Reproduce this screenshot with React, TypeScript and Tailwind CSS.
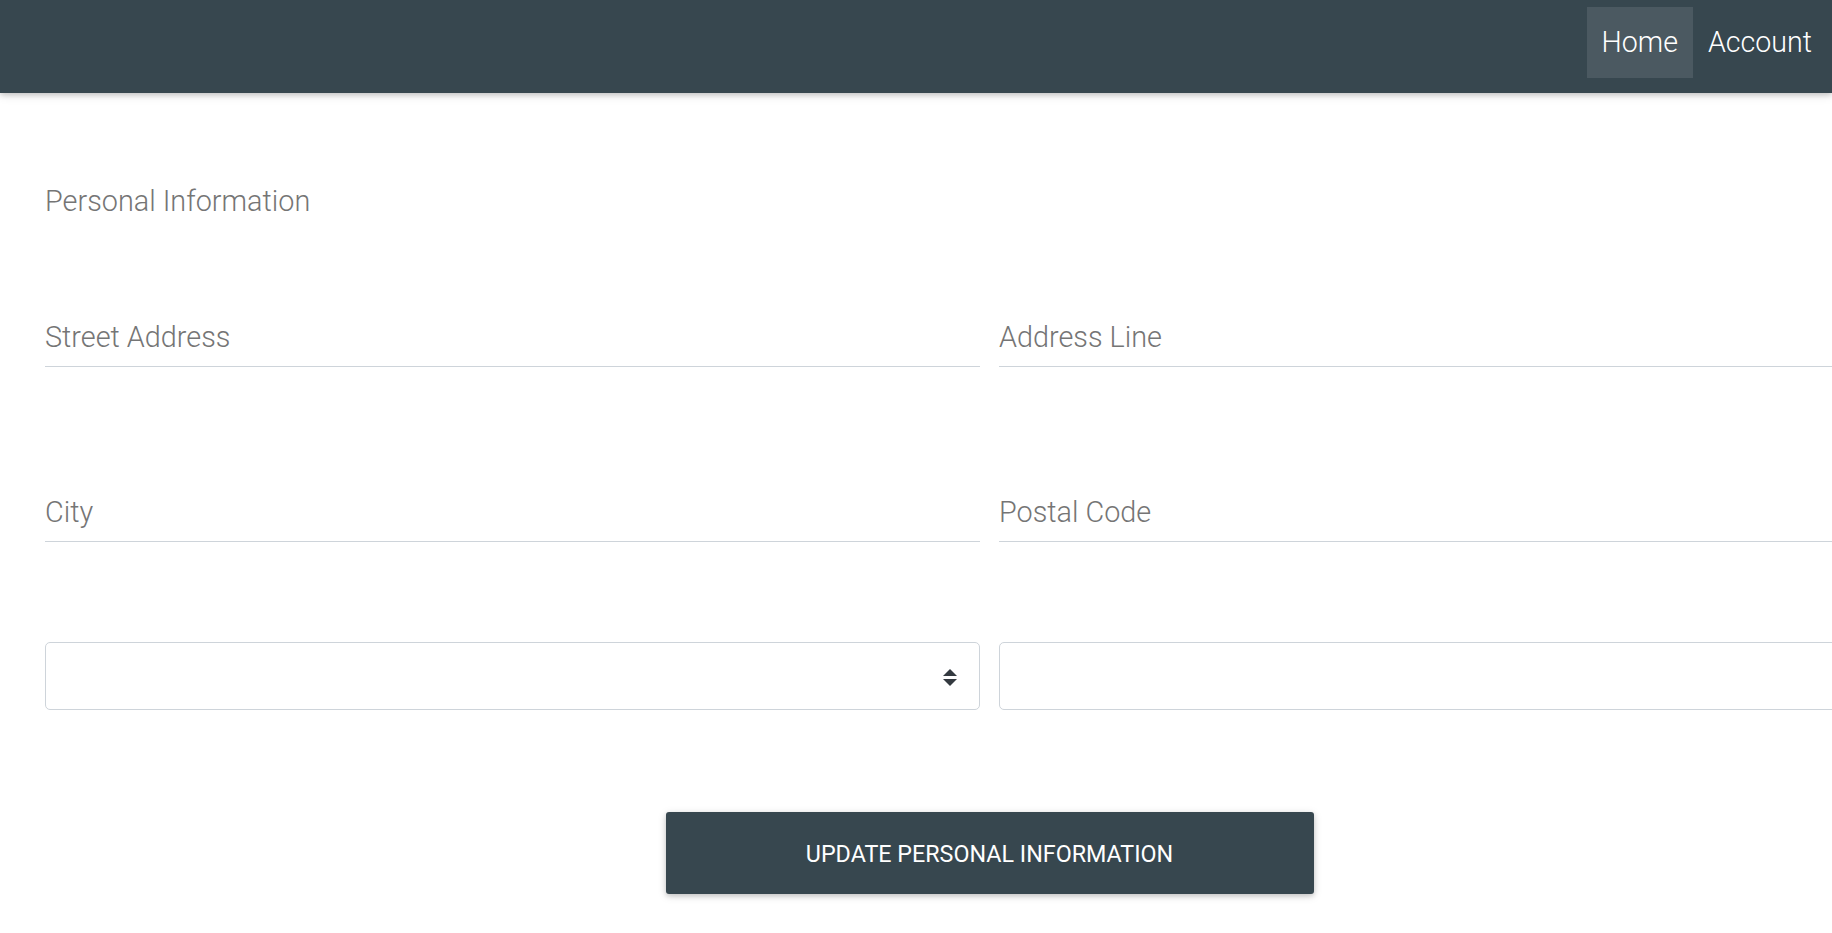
export default function App() {
  return (
    <div
      className="h-screen w-screen overflow-hidden bg-white"
      style={{ fontFamily: "Roboto, 'Liberation Sans', sans-serif" }}
    >
      <nav className="relative z-10 flex h-[93px] items-start justify-end bg-[#37474f] pr-[5px] pt-[7px] shadow-[0_2px_5px_0_rgba(0,0,0,0.16),0_2px_10px_0_rgba(0,0,0,0.12)]">
        <a className="flex h-[71px] items-center bg-[#4b5961] px-[15px] text-[28.6px] font-light text-white">
          Home
        </a>
        <a className="flex h-[71px] items-center px-[15px] text-[28.6px] font-light text-white">
          Account
        </a>
      </nav>

      <main className="pl-[45px]">
        <h2 className="mt-[91px] text-[28.8px] font-light leading-[34px] text-[#757575]">
          Personal Information
        </h2>

        <form className="mt-[102px] grid w-[1889px] grid-cols-2 gap-x-[19px]">
          <Field placeholder="Street Address" />
          <Field placeholder="Address Line" />
          <div className="col-span-2 h-[128px]" />
          <Field placeholder="City" />
          <Field placeholder="Postal Code" />
          <div className="col-span-2 h-[100px]" />

          <div className="relative">
            <select className="h-[68px] w-full appearance-none rounded-[5px] border border-[#ced4da] bg-white px-3 text-[20px] text-[#495057] outline-none">
              <option value=""></option>
            </select>
            <svg
              className="pointer-events-none absolute right-[23px] top-[27px]"
              width="14"
              height="17"
              viewBox="0 0 14 17"
            >
              <polygon points="7,0 14,7 0,7" fill="#343a40" />
              <polygon points="0,10 14,10 7,17" fill="#343a40" />
            </svg>
          </div>
          <input
            className="h-[68px] w-full rounded-[5px] border border-[#ced4da] bg-white px-3 text-[20px] outline-none"
            type="text"
          />

          <div className="col-span-2 flex justify-center pt-[102px]">
            <button
              type="button"
              className="h-[82px] w-[648px] rounded-[3px] bg-[#37474f] pt-[2px] text-[23.3px] uppercase text-white shadow-[0_2px_5px_0_rgba(0,0,0,0.16),0_2px_10px_0_rgba(0,0,0,0.12)]"
            >
              Update Personal Information
            </button>
          </div>
        </form>
      </main>
    </div>
  );
}

function Field({ placeholder }: { placeholder: string }) {
  return (
    <input
      type="text"
      placeholder={placeholder}
      className="h-[47px] w-full border-b border-[#ced4da] bg-transparent pb-[12px] text-[28.8px] font-light leading-[34px] text-[#495057] outline-none placeholder:text-[#757575]"
    />
  );
}
